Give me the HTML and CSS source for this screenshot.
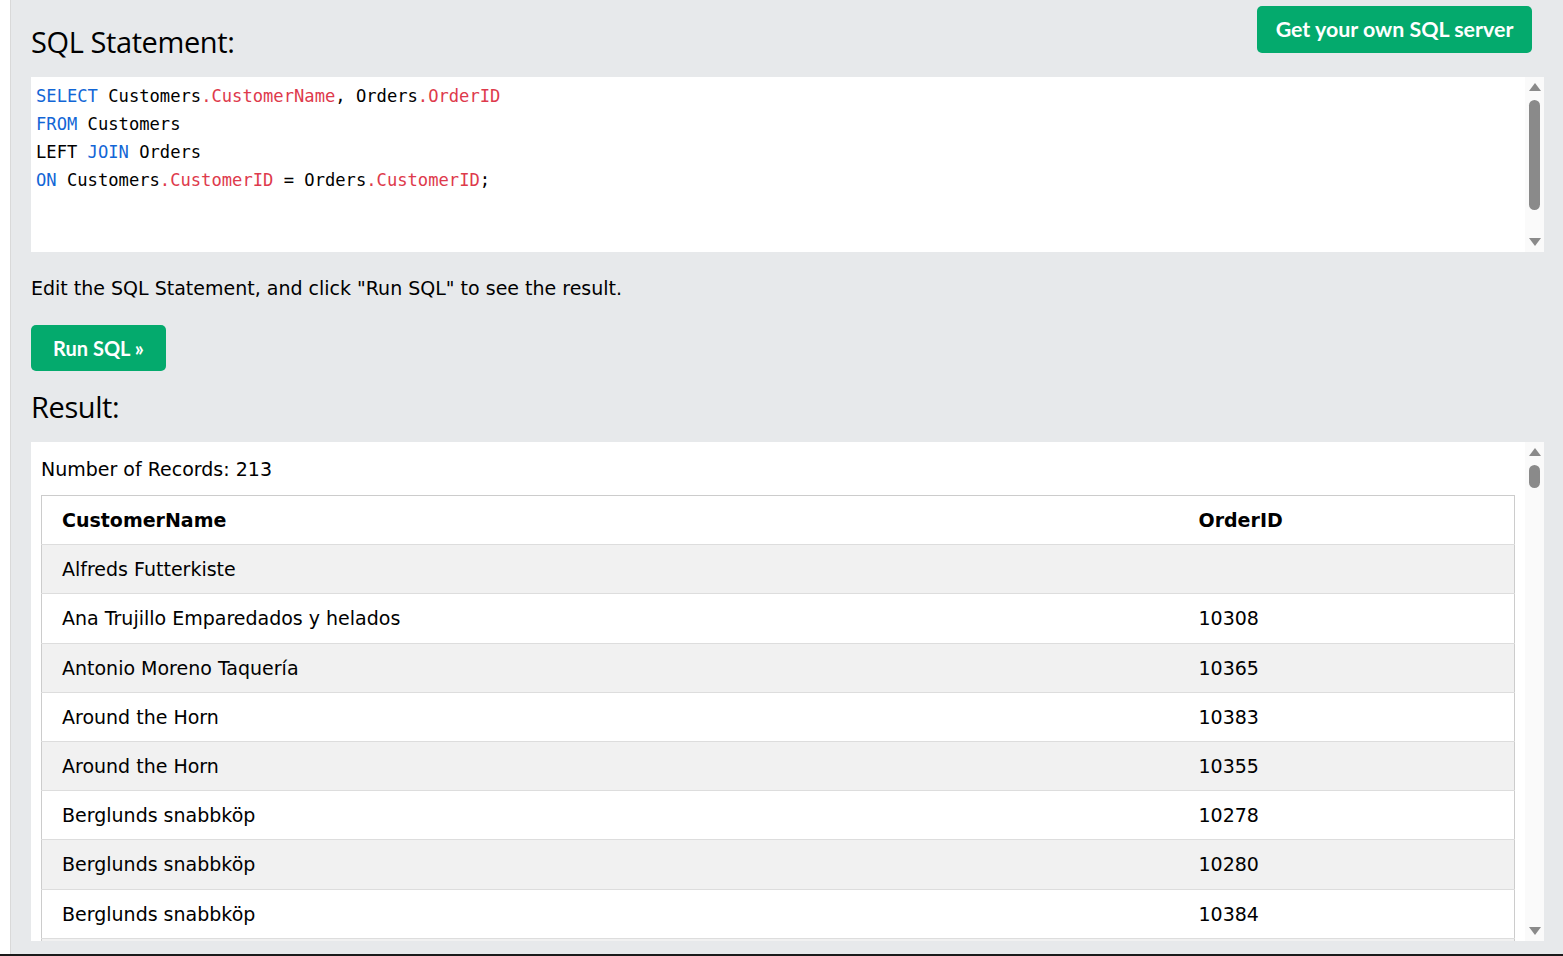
FILE: index.html
```html
<!DOCTYPE html>
<html lang="en">
<head>
<meta charset="utf-8">
<title>SQL Tryit Editor</title>
<link rel="stylesheet" href="styles.css">
</head>
<body>
<div class="frame">
  <div class="gutter"></div>
  <main class="panel">
    <div class="toprow">
      <h2 class="heading">SQL Statement:</h2>
      <a class="btn btn-server" href="#">Get your own SQL server</a>
    </div>
    <div class="codebox">
      <div class="code">
        <div class="line"><span class="kw">SELECT</span> Customers<span class="prop">.CustomerName</span>, Orders<span class="prop">.OrderID</span></div>
        <div class="line"><span class="kw">FROM</span> Customers</div>
        <div class="line">LEFT <span class="kw">JOIN</span> Orders</div>
        <div class="line"><span class="kw">ON</span> Customers<span class="prop">.CustomerID</span> = Orders<span class="prop">.CustomerID</span>;</div>
      </div>
      <div class="scrollbar">
        <span class="arrow up"></span>
        <span class="track"><span class="thumb thumb-code"></span></span>
        <span class="arrow down"></span>
      </div>
    </div>
    <p class="hint">Edit the SQL Statement, and click "Run SQL" to see the result.</p>
    <a class="btn btn-run" href="#">Run SQL »</a>
    <h2 class="heading result-heading">Result:</h2>
    <div class="resultbox">
      <div class="result">
        <div class="count">Number of Records: 213</div>
        <table class="grid">
          <colgroup><col class="c1"><col class="c2"></colgroup>
          <tr><th>CustomerName</th><th>OrderID</th></tr>
          <tr><td>Alfreds Futterkiste</td><td></td></tr>
          <tr><td>Ana Trujillo Emparedados y helados</td><td>10308</td></tr>
          <tr><td>Antonio Moreno Taquería</td><td>10365</td></tr>
          <tr><td>Around the Horn</td><td>10383</td></tr>
          <tr><td>Around the Horn</td><td>10355</td></tr>
          <tr><td>Berglunds snabbköp</td><td>10278</td></tr>
          <tr><td>Berglunds snabbköp</td><td>10280</td></tr>
          <tr><td>Berglunds snabbköp</td><td>10384</td></tr>
          <tr class="clipped"><td></td><td></td></tr>
        </table>
      </div>
      <div class="scrollbar">
        <span class="arrow up"></span>
        <span class="track"><span class="thumb thumb-result"></span></span>
        <span class="arrow down"></span>
      </div>
    </div>
  </main>
</div>
</body>
</html>
```

FILE: styles.css
```css
* { box-sizing: border-box; }
html, body { margin: 0; padding: 0; background: #fff; }
body { width: 1563px; height: 956px; overflow: hidden; }

.frame {
  display: flex;
  height: 956px;
  border-bottom: 2px solid #1a1a1a;
}
.gutter {
  width: 11px;
  flex: none;
  background: #fff;
  border-right: 1px solid #d9d9d9;
}
.panel {
  flex: 1;
  min-width: 0;
  background: #e7e9eb;
  padding: 0 19px 0 20px;
  display: flex;
  flex-direction: column;
  align-items: flex-start;
  overflow: hidden;
}

.toprow {
  align-self: stretch;
  height: 77px;
  display: flex;
  justify-content: space-between;
  align-items: flex-start;
}
.heading {
  margin: 0;
  font-family: "Open Sans", "Noto Sans", sans-serif;
  font-weight: 400;
  font-size: 29px;
  color: #000;
  letter-spacing: -0.4px;
}
.toprow .heading { margin-top: 20px; line-height: 44px; }

.btn {
  display: inline-flex;
  align-items: center;
  justify-content: center;
  background: #04aa6d;
  color: #fff;
  text-decoration: none;
  font-family: Lato, "Open Sans", sans-serif;
  font-weight: 700;
  font-size: 21px;
  border-radius: 5px;
}
.btn-server {
  margin-top: 6px;
  margin-right: 12px;
  width: 275px;
  height: 47px;
  font-size: 21.4px;
  padding-bottom: 2px;
}
.btn-run {
  width: 135px;
  height: 46px;
  font-size: 20px;
}

.codebox {
  align-self: stretch;
  height: 175px;
  background: #fff;
  display: flex;
}
.code {
  flex: 1;
  padding: 5px 5px;
  font-family: "DejaVu Sans Mono", "Liberation Mono", monospace;
  font-size: 17.15px;
  color: #000;
  display: flex;
  flex-direction: column;
}
.line {
  height: 28px;
  line-height: 28px;
  white-space: pre;
}
.kw { color: #1266d6; }
.prop { color: #de3a4c; }

.scrollbar {
  width: 19px;
  flex: none;
  background: #fafafa;
  display: flex;
  flex-direction: column;
  align-items: center;
  padding: 6px 0 6px;
}
.arrow {
  width: 0;
  height: 0;
  border-left: 6px solid transparent;
  border-right: 6px solid transparent;
  flex: none;
}
.arrow.up { border-bottom: 8px solid #8a8a8a; }
.arrow.down { border-top: 8px solid #8a8a8a; }
.track {
  flex: 1;
  align-self: stretch;
  display: flex;
  flex-direction: column;
  align-items: center;
  padding: 9px 0;
}
.thumb {
  width: 11px;
  background: #8a8a8a;
  border-radius: 6px;
  display: block;
}
.thumb-code { height: 110px; }
.thumb-result { height: 23px; }

.hint {
  margin: 23px 0 0;
  font-family: "DejaVu Sans", Verdana, sans-serif;
  font-size: 19px;
  line-height: 26px;
  color: #000;
}
.btn-run { margin-top: 24px; }
.result-heading { margin-top: 14px; line-height: 44px; }

.resultbox {
  align-self: stretch;
  margin-top: 13px;
  height: 499px;
  background: #fff;
  display: flex;
}
.result {
  flex: 1;
  min-width: 0;
  padding: 10px 10px 0;
  overflow: hidden;
  font-family: "DejaVu Sans", Verdana, sans-serif;
  font-size: 19px;
  color: #000;
}
.count { height: 43px; line-height: 34px; margin-top: 0; }
.grid {
  width: 1474px;
  border-collapse: collapse;
  border: 1px solid #cccccc;
}
.c1 { width: 1137px; }
.grid th, .grid td {
  height: 49.2px;
  padding: 0 20px;
  text-align: left;
  border-bottom: 1px solid #dddddd;
  vertical-align: middle;
}
.grid th { font-weight: 700; }
.grid tr:nth-child(even) { background: #f1f1f1; }
```
